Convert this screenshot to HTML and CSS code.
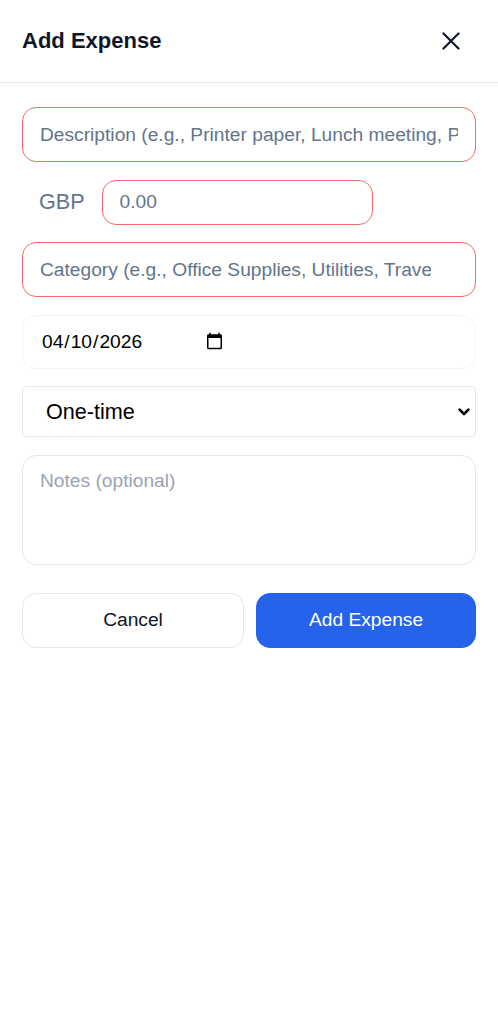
FILE: index.html
```html
<!DOCTYPE html>
<html lang="en">
<head>
<meta charset="utf-8">
<title>Add Expense</title>
<link rel="stylesheet" href="styles.css">
</head>
<body>
<div class="modal">
  <header class="modal-header">
    <h1 class="modal-title">Add Expense</h1>
    <button class="close-btn" type="button" aria-label="Close">
      <svg width="18" height="18" viewBox="0 0 18 18" fill="none" stroke="#0f172a" stroke-width="2.2" stroke-linecap="round"><path d="M1.5 1.5L16.5 16.5M16.5 1.5L1.5 16.5"/></svg>
    </button>
  </header>
  <form class="form">
    <input class="field field-error" type="text" placeholder="Description (e.g., Printer paper, Lunch meeting, Parking)">
    <div class="amount-row">
      <span class="currency">GBP</span>
      <input class="field field-error amount" type="text" placeholder="0.00">
    </div>
    <input class="field field-error category" type="text" placeholder="Category (e.g., Office Supplies, Utilities, Travel)">
    <input class="field date" type="date" value="2026-04-10">
    <div class="select-wrap">
      <select class="select">
        <option>One-time</option>
        <option>Monthly</option>
        <option>Yearly</option>
      </select>
      <svg class="select-arrow" width="12" height="8" viewBox="0 0 12 8" fill="none" stroke="#000" stroke-width="2.6" stroke-linecap="round" stroke-linejoin="round"><path d="M1.6 1.6L6 6L10.4 1.6"/></svg>
    </div>
    <textarea class="field notes" placeholder="Notes (optional)"></textarea>
    <div class="actions">
      <button type="button" class="btn btn-cancel">Cancel</button>
      <button type="button" class="btn btn-primary">Add Expense</button>
    </div>
  </form>
</div>
</body>
</html>
```

FILE: styles.css
```css
* { box-sizing: border-box; }

body {
  margin: 0;
  background: #ffffff;
  font-family: "Liberation Sans", Arial, sans-serif;
  color: #0f172a;
}

.modal-header {
  height: 83px;
  border-bottom: 1px solid #e5e7eb;
  display: flex;
  align-items: center;
  justify-content: space-between;
  padding: 0 38px 0 22px;
}

.modal-title {
  margin: 0;
  font-size: 22px;
  font-weight: 700;
  color: #0f172a;
}

.close-btn {
  border: 0;
  background: none;
  padding: 0;
  display: flex;
  cursor: pointer;
}

.form {
  display: flex;
  flex-direction: column;
  gap: 17.5px;
  padding: 24px 22px;
}

.field {
  width: 100%;
  height: 55px;
  border: 1px solid #e2e8f0;
  border-radius: 14px;
  padding: 0 17px;
  font-family: "Liberation Sans", Arial, sans-serif;
  font-size: 19.2px;
  color: #0f172a;
  background: #fff;
  outline: none;
}

.field::placeholder { color: #64748b; }

.field-error { border-color: #f26b6b; }

.field.category { padding-right: 44px; }

.amount-row {
  display: flex;
  align-items: center;
  height: 45px;
}

.currency {
  font-size: 21.6px;
  color: #64748b;
  padding: 0 17px;
}

.field.amount {
  width: 271px;
  height: 45px;
}

.field.date {
  height: 54px;
  border-color: #f1f5f9;
  padding: 0 18px;
  color: #000;
  display: flex;
  align-items: center;
}

.field.date::-webkit-datetime-edit {
  flex: 0 0 auto;
}

.field.date::-webkit-calendar-picker-indicator {
  margin-left: 28px;
}

.select-wrap {
  position: relative;
}

.select {
  display: block;
  width: 100%;
  height: 51px;
  border: 1px solid #e2e8f0;
  border-radius: 4px;
  padding: 0 30px 0 23px;
  font-family: "Liberation Sans", Arial, sans-serif;
  font-size: 21.6px;
  color: #000;
  background: #fff;
  appearance: none;
  -webkit-appearance: none;
  outline: none;
}

.select-arrow {
  position: absolute;
  right: 6px;
  top: 22px;
  pointer-events: none;
}

.field.notes {
  height: 110px;
  padding: 13px 17px;
  resize: none;
  line-height: 1.2;
}

.field.notes::placeholder { color: #9ca3af; }

.actions {
  display: grid;
  grid-template-columns: 222px 1fr;
  gap: 12px;
  margin-top: 10.5px;
}

.btn {
  height: 55px;
  border-radius: 14px;
  font-family: "Liberation Sans", Arial, sans-serif;
  font-size: 19.2px;
  cursor: pointer;
}

.btn-cancel {
  background: #fff;
  border: 1px solid #e2e8f0;
  color: #0f172a;
}

.btn-primary {
  background: #2563eb;
  border: 1px solid #2563eb;
  color: #fff;
}
```
